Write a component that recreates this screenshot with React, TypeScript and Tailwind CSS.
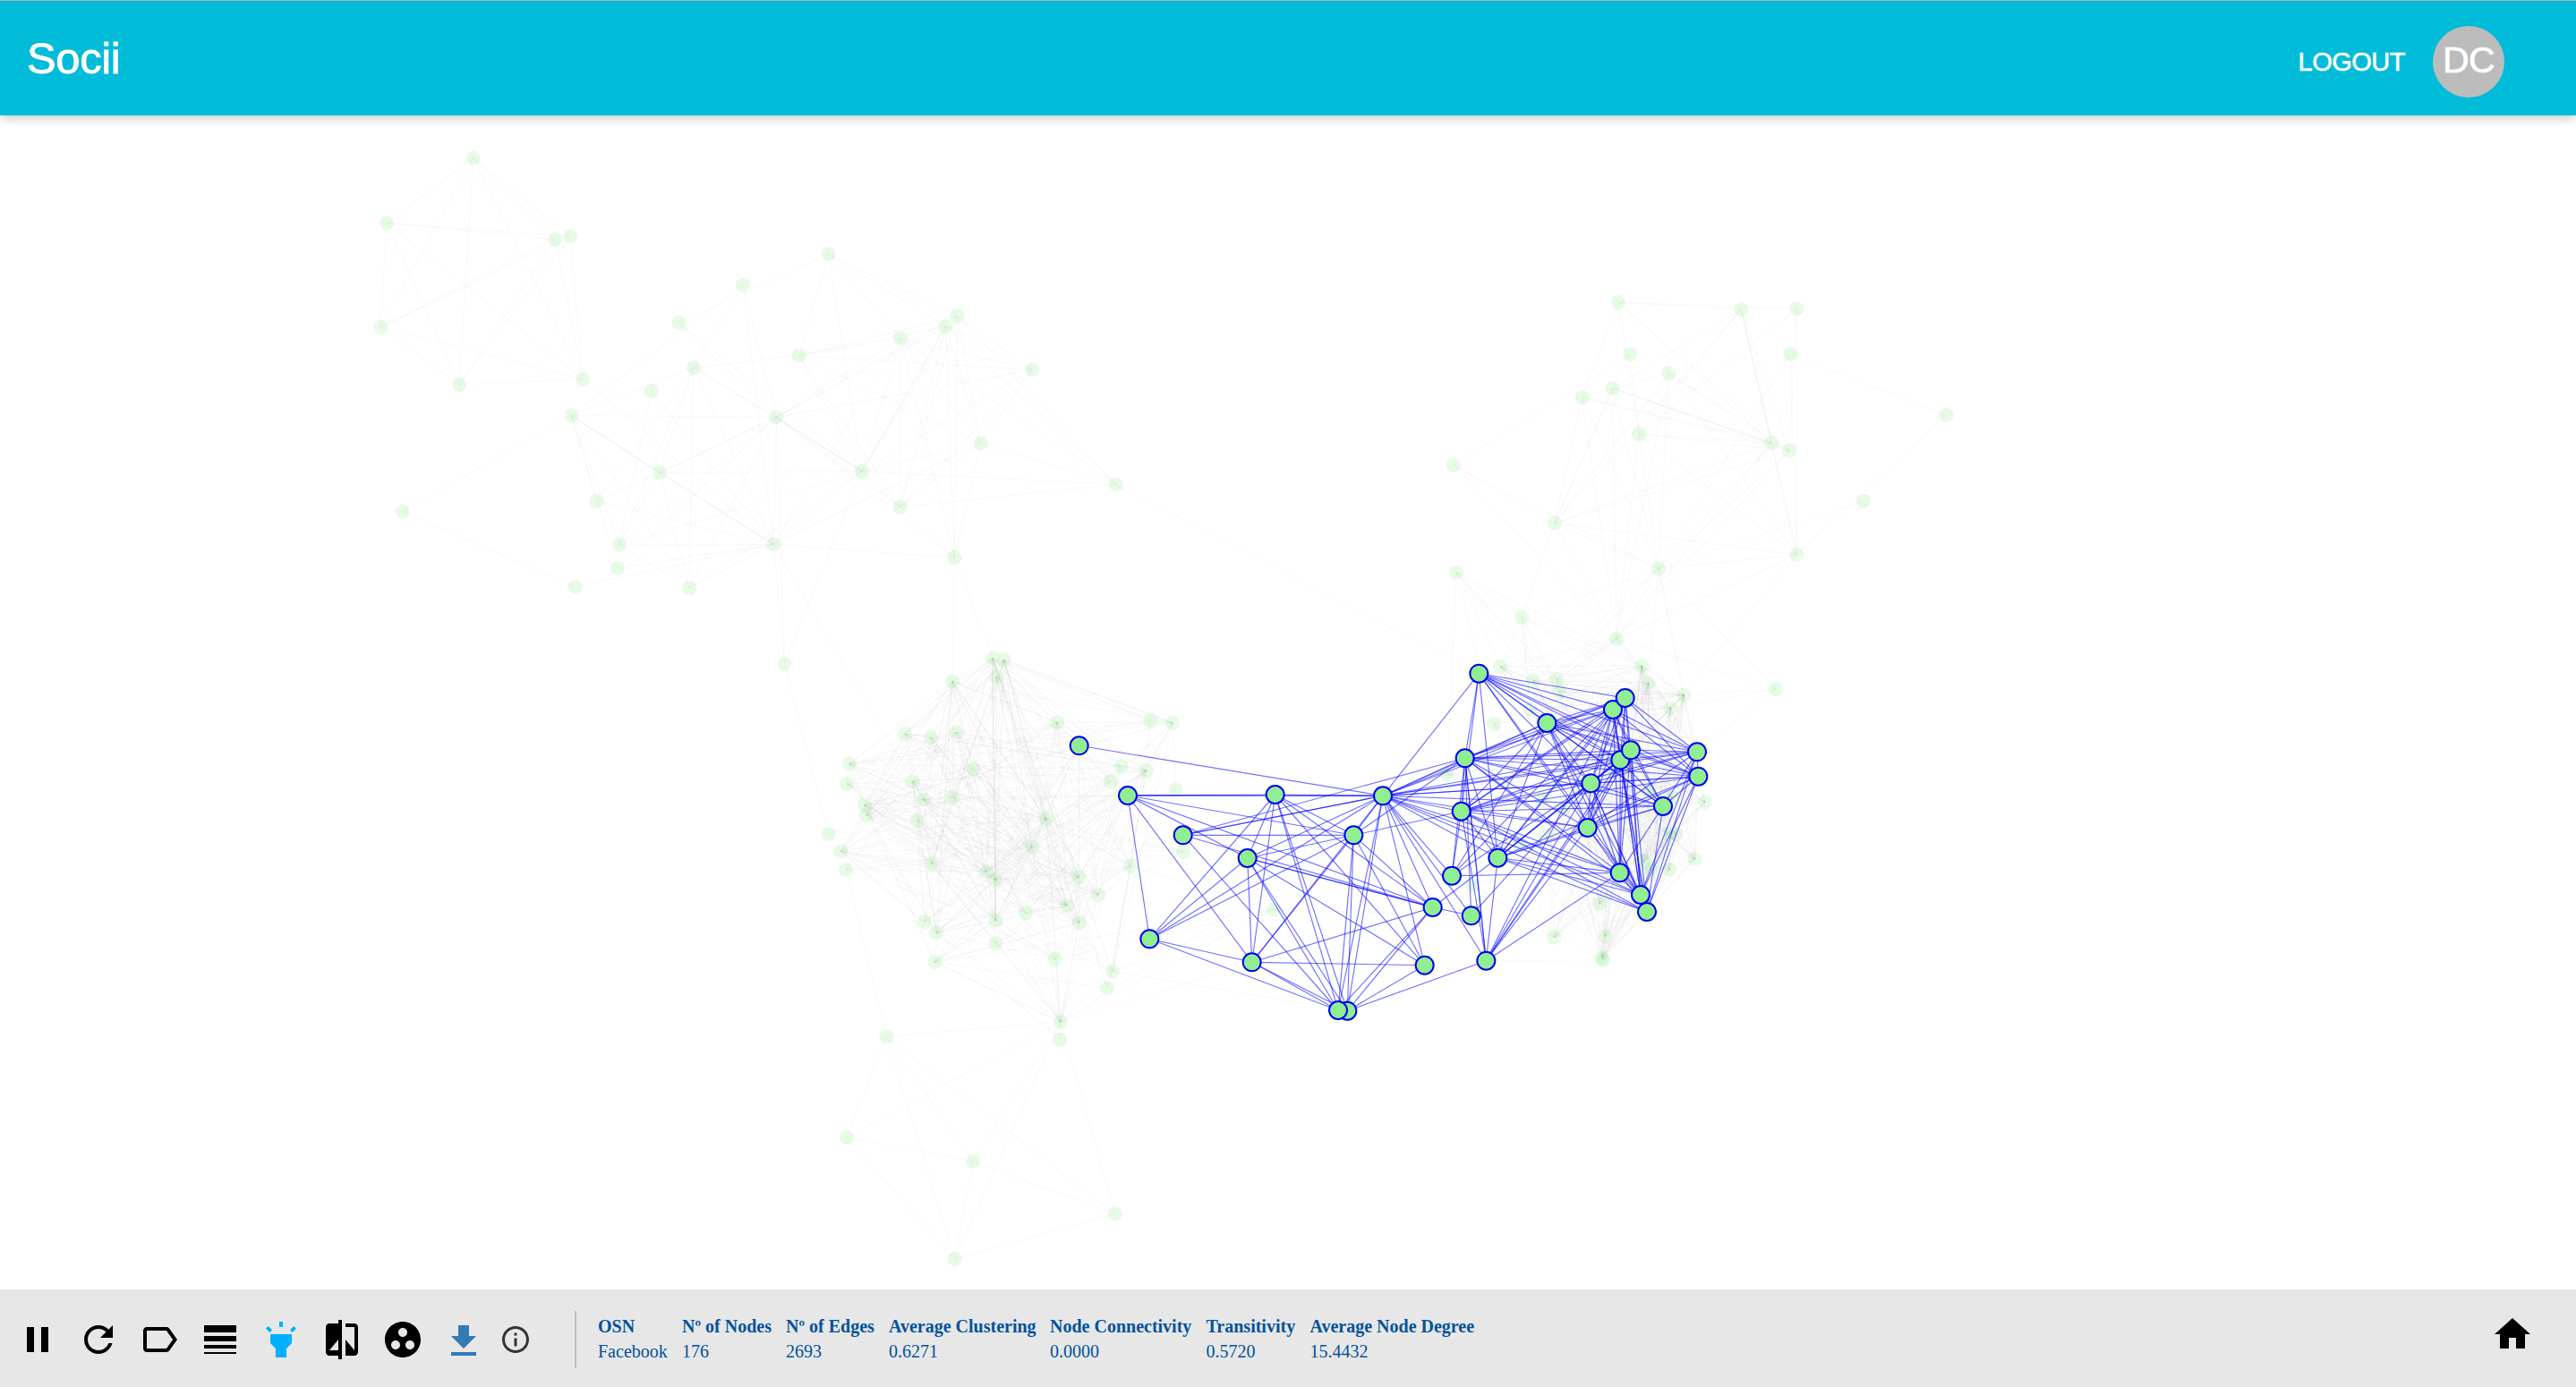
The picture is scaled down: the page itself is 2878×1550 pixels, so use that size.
import React from "react";

type Point = [number, number];
type Pair = [number, number];

/** Places a community's local layout on the shared canvas. */
function place(ox: number, oy: number, sx: number, sy: number, pts: Point[]): Point[] {
  return pts.map(([x, y]) => [ox + x / sx, oy + y / sy]);
}

/** Reads an adjacency list such as "0:1,2 1:3". */
function adjacency(text: string): Pair[] {
  return text
    .trim()
    .split(/\s+/)
    .flatMap((row) => {
      const [from, to] = row.split(":");
      return to.split(",").map((t): Pair => [Number(from), Number(t)]);
    });
}

const west = place(350, 130, 1.6333, 2.45, [
  [292, 114], [134, 292], [441, 337], [469, 329], [123, 577], [266, 735], [492, 720], [940, 377],
  [784, 461], [667, 565], [1175, 546], [1154, 575], [1072, 607], [886, 655], [1312, 694], [694, 688],
  [617, 752], [471, 819], [845, 824], [1218, 895], [632, 976], [1001, 972], [1465, 1008], [1071, 1070],
  [517, 1054], [163, 1082], [558, 1174], [840, 1172], [1170, 1208], [555, 1237], [478, 1288],
  [686, 1292], [860, 1499],
]);

const westEdges = adjacency(`
  0:1,4,5,6,2,3 1:2,3,4,5,6 2:4,5,6 3:4,5,6 4:5,6 5:6 6:27
  7:9,13,21,12,11,10 8:17,15,27,18 9:18,21 13:10,11,12,14,19,21,23 14:10,11,12,19,21,18,23
  15:13,18,21,17,24,26,20,31,27 16:26,27 17:18,20,20,27,26,29,31,25,24 25:30 30:27
  18:20,20,10,12,11,21,21,28,23,27,31,26,29,32 20:24,26,31,27,27,21 24:27 26:27,31,21 29:27
  31:27,21 27:21,19,28,32,12 32:21 21:19,22,10,11,12,28,11 19:10,11,12,22,23,28
  22:10,12,11,23 23:10,11,12 28:10,11,12
`);

const middle = place(880, 700, 3, 2.119, [
  [687, 75], [725, 79], [699, 119], [552, 130], [393, 254], [479, 262], [565, 250], [904, 227],
  [1215, 223], [1291, 228], [207, 325], [199, 373], [419, 368], [456, 410], [555, 404], [622, 338],
  [257, 423], [264, 446], [435, 460], [137, 492], [178, 533], [195, 576], [483, 562], [459, 700],
  [498, 726], [493, 795], [697, 696], [697, 751], [666, 581], [694, 600], [819, 522], [867, 456],
  [798, 679], [936, 662], [977, 702], [975, 594], [1042, 636], [1150, 568], [1082, 368], [1117, 331],
  [1202, 341], [1301, 387], [1327, 534], [897, 788], [1089, 817], [1071, 857], [915, 937], [912, 978],
  [331, 971], [198, 1210], [621, 1267], [1097, 1391], [560, 1498], [1629, 670],
]);

const middleEdges = adjacency(`
  48:46,49,50,51,52,21 49:46,50,52 50:46,51,52 51:46,52 52:46
  46:0,31,26,24,30,35,34,36,29,18,22,44,25,40,43,53 47:24,46 19:20,13,12 21:22,28
  9:0,1,1,2,41,7,40,35,36,38,8 8:1,40 41:40,37 42:30,31,36,40,29 45:44,25,37
  44:37,40,35,26,53,9 25:53,34,26 43:53,24,26,29 0:29,31,35 1:31,35,30
  2:22,26 3:22,24,31,7,14,10,15
`);

/** How strongly each member of the middle community is tied to the others. */
const middlePull = [
  8, 7, 5, 7, 6, 6, 6, 7, 1.5, 2, 5, 4, 6, 8, 7, 6, 5, 7, 6, 0.5, 6, 2, 6, 3, 8, 3, 8, 3, 7, 8, 8, 9.5,
  3, 8, 7, 8, 5, 4.5, 4, 2, 7, 0.5, 2, 2, 2.5, 0.5, 2.5, 0,
];

const east = place(1580, 300, 2.45, 2.904, [
  [559, 110], [895, 133], [1047, 131], [591, 279], [1030, 278], [697, 340], [543, 389], [460, 418],
  [615, 538], [978, 566], [1027, 591], [1457, 476], [107, 638], [1230, 755], [384, 827], [1047, 929],
  [669, 975], [116, 986], [295, 1132], [554, 1202], [236, 1291], [623, 1290], [326, 1338], [390, 1333],
  [397, 1373], [641, 1345], [738, 1384], [702, 1427], [990, 1365], [318, 1432], [218, 1478],
]);

const eastEdges = adjacency(`
  0:1,2,9,10,7,8 1:6,8,9,9,10,15,14 2:8,15,10 3:12,8,6 4:11,15,16 5:6,9,10,14,16,15,19
  6:9,9,10,7,14,14,16,19 7:9,10,14,16,19 8:9,10,15,16,19 9:15,14,16,19,10 10:14,16,19
  11:15 12:14,16,19 13:16 14:15,16,18,19 15:16,19,27 16:18,19,22,23,26,26,28,25
  17:20,23,22,24,21,18,30 18:20,22,23,24,21,25,29,29,27 19:20,21,22,23,24,25,26,28,29,30,27
  28:26,27 20:21,22,24,25,29 21:22,23,24,25,27,26,29 22:23,25,26 23:25,27 24:25,26,27 26:27,25,24,29
`);

const southEast = place(1540, 720, 3, 3, [
  [230, 436], [548, 520], [621, 552], [560, 641], [476, 673], [316, 807], [906, 491], [985, 513],
  [1095, 528], [969, 636], [997, 636], [1061, 720], [890, 728], [912, 757], [976, 755], [741, 870],
  [759, 980], [589, 983], [753, 1058], [749, 1052], [789, 425],
]);

const selected = place(1160, 720, 3, 3, [
  [137, 340], [300, 507], [794, 504], [1155, 508], [485, 640], [701, 717], [1057, 640], [373, 988],
  [716, 1066], [1295, 1076], [1036, 1229], [1005, 1227], [1322, 882], [1451, 910], [1501, 1061],
  [1386, 776], [1540, 716], [1418, 560], [1430, 382], [1477, 98], [1705, 264], [1926, 219],
  [1967, 180], [1951, 388], [1986, 355], [1852, 466], [1841, 615], [2208, 361], [2212, 443],
  [2094, 543], [1949, 766], [2019, 840], [2040, 897],
]);

const selectedEdges = adjacency(`
  0:3 1:2,3,3,6,12,5,8,7 2:7,5,8,6,11,10,12,9,3
  3:4,5,7,6,11,10,8,12,9,13,14,15,16,17,18,19,20,21,22,23,24,25,26,28,29,30,31,32,27
  4:18,6,12,11,3 5:6,12,12,9,7,8,11,10 6:7,8,11,10,12,9,17,18 7:8,11 8:12,9,11,10
  9:10 10:14,12 11:12 12:13,16 15:17,18,30,25,21,20 13:18,25
  14:16,17,18,18,21,25,26,23,30,24 16:17,19,20,21,22,23,24,25,26,28,29,30,31,32,18
  17:19,18,20,21,22,23,24,25,26,27,28,29,30,31,32
  18:19,20,21,22,23,24,25,26,27,28,29,30,31
  19:20,21,22,23,24,25,26,27,28,29,31
  20:21,22,23,24,25,26,27,28,29,30,31
  21:22,23,24,25,26,27,28,29,30,31,32 22:23,24,25,26,27,28,30,31
  23:25,26,27,28,29,30,31,32 24:25,26,27,28,29,30,31,32 25:26,27,28,29,30,31,32
  26:27,28,29,30,31 27:28,29,31,32 28:31,32,29 29:30,32 30:31,32 31:32
`);

/** Repeatable 0..1 value for a pair of node numbers. */
function spread(a: number, b: number): number {
  const v = Math.sin(a * 127.1 + b * 311.7) * 43758.5453;
  return v - Math.floor(v);
}

const line = (a: Point, b: Point) =>
  `M${a[0].toFixed(1)} ${a[1].toFixed(1)}L${b[0].toFixed(1)} ${b[1].toFixed(1)}`;

const dimEdges: string[] = [
  ...westEdges.map(([a, b]) => line(west[a], west[b])),
  ...middleEdges.map(([a, b]) => line(middle[a], middle[b])),
  ...eastEdges.map(([a, b]) => line(east[a], east[b])),
  line(west[22], selected[19]),
  line(west[28], middle[3]),
  line(west[28], middle[0]),
  line(west[27], middle[13]),
  line(west[32], middle[19]),
  line(east[17], southEast[0]),
  line(east[28], selected[27]),
  line(selected[14], southEast[18]),
  line(middle[42], southEast[0]),
  line(middle[46], selected[12]),
  line(middle[46], selected[6]),
  line(middle[44], selected[10]),
  line(middle[53], selected[13]),
  line(middle[37], middle[53]),
];

middlePull.forEach((pa, a) => {
  for (let b = a + 1; b < middlePull.length; b++) {
    if (spread(a, b) < (pa * middlePull[b]) / 80) dimEdges.push(line(middle[a], middle[b]));
  }
  [0, 1].forEach((s) => {
    if (spread(a + 60, s) < pa / 11) dimEdges.push(line(middle[a], selected[s]));
  });
});

const eastCore: Point[] = [
  ...southEast.slice(6, 15), southEast[20], east[21], east[25], east[26], east[27],
  ...selected.slice(23), selected[21],
];
const eastRim: Point[] = [
  ...southEast.slice(0, 6), east[20], east[22], east[23], east[24], east[29], east[30],
  selected[18], selected[17], selected[20],
];
const eastTail: Point[] = southEast.slice(15, 20);
eastCore.forEach((p, a) => {
  eastCore.forEach((q, b) => {
    if (b > a && spread(a + 3, b + 5) < 0.8) dimEdges.push(line(p, q));
  });
  eastRim.forEach((q, b) => {
    if (spread(a + 17, b + 9) < 0.34) dimEdges.push(line(p, q));
  });
  eastTail.forEach((q, b) => {
    if (spread(a + 31, b + 2) < 0.6) dimEdges.push(line(p, q));
  });
});
eastTail.forEach((q, b) =>
  eastRim.forEach((p, a) => {
    if (spread(a + 41, b + 23) < 0.35) dimEdges.push(line(p, q));
  }),
);

const dimNodes: Point[] = [...west, ...middle, ...east, ...southEast];

function Network() {
  return (
    <svg className="block h-[1312px] w-full" viewBox="0 129 2878 1312">
      <g stroke="#000" strokeOpacity="0.024" strokeWidth="1.2">
        {dimEdges.map((d, i) => (
          <path key={i} d={d} />
        ))}
      </g>
      <g fill="#90ee90" fillOpacity="0.22">
        {dimNodes.map(([x, y], i) => (
          <circle key={i} cx={x} cy={y} r="8" />
        ))}
      </g>
      <g stroke="#0000ff" strokeOpacity="0.56" strokeWidth="1.15">
        {selectedEdges.map(([a, b], i) => (
          <path key={i} d={line(selected[a], selected[b])} />
        ))}
      </g>
      <g fill="#90ee90" stroke="#0000f0" strokeWidth="2">
        {selected.map(([x, y], i) => (
          <circle key={i} cx={x} cy={y} r="10" />
        ))}
      </g>
    </svg>
  );
}

const icons = {
  pause: "M6 19h4V5H6v14zm8-14v14h4V5h-4z",
  refresh:
    "M17.65 6.35C16.2 4.9 14.21 4 12 4c-4.42 0-7.99 3.58-7.99 8s3.57 8 7.99 8c3.73 0 6.84-2.55 7.73-6h-2.08c-.82 2.33-3.04 4-5.65 4-3.31 0-6-2.69-6-6s2.69-6 6-6c1.66 0 3.14.69 4.22 1.78L13 11h7V4l-2.35 2.35z",
  label:
    "M17.63 5.84C17.27 5.33 16.67 5 16 5L5 5.01C3.9 5.01 3 5.9 3 7v10c0 1.1.9 1.99 2 1.99L16 19c.67 0 1.27-.33 1.63-.84L22 12l-4.37-6.16zM16 17H5V7h11l3.55 5L16 17z",
  weight: "M3 17h18v-2H3v2zm0 3h18v-1H3v1zm0-7h18v-3H3v3zm0-9v4h18V4H3z",
  highlight:
    "M6 14l3 3v5h6v-5l3-3V9H6zm5-12h2v3h-2zM3.5 5.875L4.914 4.46l2.12 2.122L5.62 7.997zm13.46.71l2.123-2.12 1.414 1.414L18.375 8z",
  compare:
    "M10 3H5c-1.1 0-2 .9-2 2v14c0 1.1.9 2 2 2h5v2h2V1h-2v2zm0 15H5l5-6v6zm9-15h-5v2h5v13l-5-6v9h5c1.1 0 2-.9 2-2V5c0-1.1-.9-2-2-2z",
  group:
    "M12 2C6.48 2 2 6.48 2 12s4.48 10 10 10 10-4.48 10-10S17.52 2 12 2zM8 17.5c-1.38 0-2.5-1.12-2.5-2.5s1.12-2.5 2.5-2.5 2.5 1.12 2.5 2.5-1.12 2.5-2.5 2.5zM9.5 8c0-1.38 1.12-2.5 2.5-2.5s2.5 1.12 2.5 2.5-1.12 2.5-2.5 2.5S9.5 9.38 9.5 8zm6.5 9.5c-1.38 0-2.5-1.12-2.5-2.5s1.12-2.5 2.5-2.5 2.5 1.12 2.5 2.5-1.12 2.5-2.5 2.5z",
  download: "M19 9h-4V3H9v6H5l7 7 7-7zM5 18v2h14v-2H5z",
  info: "M11 17h2v-6h-2v6zm1-15C6.48 2 2 6.48 2 12s4.48 10 10 10 10-4.48 10-10S17.52 2 12 2zm0 18c-4.41 0-8-3.59-8-8s3.59-8 8-8 8 3.59 8 8-3.59 8-8 8zM11 9h2V7h-2v2z",
  home: "M10 20v-6h4v6h5v-8h3L12 3 2 12h3v8z",
};

function Icon({ d, className }: { d: string; className: string }) {
  return (
    <svg viewBox="0 0 24 24" fill="currentColor" className={className}>
      <path d={d} />
    </svg>
  );
}

const stats = [
  { label: "OSN", value: "Facebook", width: "w-[94px]" },
  { label: "Nº of Nodes", value: "176", width: "w-[116px]" },
  { label: "Nº of Edges", value: "2693", width: "w-[115px]" },
  { label: "Average Clustering", value: "0.6271", width: "w-[180px]" },
  { label: "Node Connectivity", value: "0.0000", width: "w-[174.5px]" },
  { label: "Transitivity", value: "0.5720", width: "w-[116px]" },
  { label: "Average Node Degree", value: "15.4432", width: "w-[200px]" },
];

export default function App() {
  return (
    <div className="flex h-[1550px] w-[2878px] flex-col overflow-hidden bg-white">
      <header className="relative flex h-[129px] shrink-0 items-start justify-between border-t border-[#b4b4b4] bg-[#00bcd8] pr-20 pl-[30px] font-['Liberation_Sans',sans-serif] text-white shadow-[0_2px_12px_rgba(0,0,0,0.24)]">
        <h1 className="mt-[36px] text-[49px] leading-[56px] tracking-[-0.4px] [-webkit-text-stroke:0.8px_white]">
          Socii
        </h1>
        <div className="mt-7 flex h-20 items-center">
          <button className="mr-[31px] text-[29px] leading-8 tracking-[-0.5px] [-webkit-text-stroke:0.6px_white]">
            LOGOUT
          </button>
          <div className="flex size-20 items-center justify-center rounded-full bg-[#bcbcbc] pb-1 text-[41px] leading-none tracking-[-0.5px] [-webkit-text-stroke:0.6px_white]">
            DC
          </div>
        </div>
      </header>

      <main className="min-h-0 flex-1">
        <Network />
      </main>

      <footer className="flex h-[109px] shrink-0 items-start justify-between bg-[#e7e7e7] pr-[47px] pl-[18px]">
        <div className="flex items-start">
          <div className="mt-8 flex items-start gap-5 text-black">
            <Icon d={icons.pause} className="size-12" />
            <Icon d={icons.refresh} className="size-12" />
            <Icon d={icons.label} className="size-12" />
            <Icon d={icons.weight} className="size-12" />
            <Icon d={icons.highlight} className="size-12 text-[#00b0ff]" />
            <Icon d={icons.compare} className="size-12" />
            <Icon d={icons.group} className="size-12" />
            <Icon d={icons.download} className="mt-0.5 size-12 text-[#337ab7]" />
          </div>
          <Icon d={icons.info} className="mt-[38px] ml-4 size-9 text-[#333]" />
          <div className="mt-6 ml-12 h-16 w-0.5 bg-[#bebebe]" />
          <dl className="mt-[27px] ml-6 flex font-['Liberation_Serif',serif] text-[20px] leading-7 text-[#00529b]">
            {stats.map((s) => (
              <div key={s.label} className={`${s.width} whitespace-nowrap`}>
                <dt className="font-bold">{s.label}</dt>
                <dd>{s.value}</dd>
              </div>
            ))}
          </dl>
        </div>
        <Icon d={icons.home} className="mt-[26px] size-12 text-black" />
      </footer>
    </div>
  );
}
